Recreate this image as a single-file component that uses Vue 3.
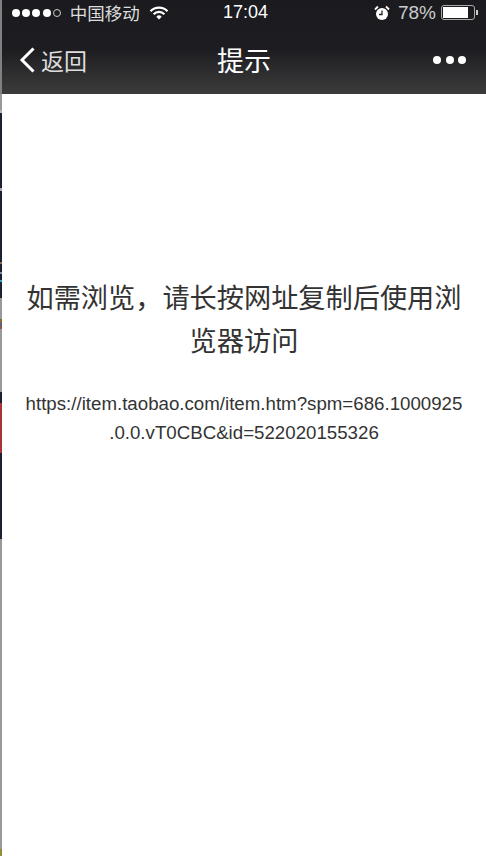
<script setup>
const dots = [1, 2, 3, 4]
const edge = [
  { h: 94, c: '#808080' },
  { h: 16, c: '#999999' },
  { h: 3, c: '#b5b5b5' },
  { h: 75, c: '#1c2033' },
  { h: 3, c: '#aaaaaa' },
  { h: 71, c: '#1c2033' },
  { h: 2, c: '#8a6a5a' },
  { h: 8, c: '#1c2033' },
  { h: 2, c: '#7a8aa0' },
  { h: 6, c: '#1c2033' },
  { h: 2, c: '#3aa0c0' },
  { h: 16, c: '#1c2033' },
  { h: 21, c: '#999999' },
  { h: 4, c: '#8a6a30' },
  { h: 3, c: '#5a5a90' },
  { h: 3, c: '#8a5a40' },
  { h: 63, c: '#999999' },
  { h: 11, c: '#1c2033' },
  { h: 50, c: '#a83434' },
  { h: 86, c: '#1c2033' },
  { h: 310, c: '#999999' },
  { h: 7, c: '#8f8f3c' }
]
</script>

<template>
  <div class="page">
    <div class="edge">
      <i v-for="(s, n) in edge" :key="n" :style="{ height: s.h + 'px', background: s.c }"></i>
    </div>
    <main class="screen">
      <header class="head">
        <div class="status">
          <div class="status-left">
            <span class="signal">
              <i v-for="d in dots" :key="d" class="dot"></i>
              <i class="dot hollow"></i>
            </span>
            <span class="carrier">中国移动</span>
            <svg class="wifi" viewBox="0 0 20 14" width="20" height="14">
              <path d="M1.5 5.2a12 12 0 0 1 17 0" fill="none" stroke="#fff" stroke-width="2.2" />
              <path d="M4.6 8.2a7.6 7.6 0 0 1 10.8 0" fill="none" stroke="#fff" stroke-width="2.2" />
              <path d="M7.3 10.7a3.8 3.8 0 0 1 5.4 0L10 13.4z" fill="#fff" />
            </svg>
          </div>
          <span class="time">17:04</span>
          <div class="status-right">
            <svg class="alarm" viewBox="0 0 16 16" width="16" height="16">
              <circle cx="8" cy="9" r="6" fill="#fff" />
              <path d="M8 5.5V9.5H5" fill="none" stroke="#222" stroke-width="1.3" />
              <path d="M1 4.5 4 1.5M15 4.5 12 1.5" stroke="#fff" stroke-width="1.8" />
            </svg>
            <span class="pct">78%</span>
            <span class="battery"><span class="fill"></span></span>
            <span class="nub"></span>
          </div>
        </div>
        <div class="nav">
          <div class="back">
            <svg viewBox="0 0 18 28" width="18" height="28">
              <path d="M15.5 2.5 4 14l11.5 11.5" fill="none" stroke="#fff" stroke-width="3" />
            </svg>
            <span>返回</span>
          </div>
          <div class="title">提示</div>
          <div class="more"><i></i><i></i><i></i></div>
        </div>
      </header>
      <section class="body">
        <p class="msg">如需浏览，请长按网址复制后使用浏览器访问</p>
        <p class="url">https://item.taobao.com/item.htm?spm=686.1000925.0.0.vT0CBC&amp;id=522020155326</p>
      </section>
    </main>
  </div>
</template>

<style>
html, body { margin: 0; background: #fff; }
</style>

<style scoped>
.page {
  display: flex;
  width: 486px;
  height: 857px;
  overflow: hidden;
  font-family: "Liberation Sans", "Noto Sans CJK SC", sans-serif;
}
.edge { width: 2px; flex: none; display: flex; flex-direction: column; }
.edge i { display: block; flex: none; }
.screen { flex: 1; min-width: 0; display: flex; flex-direction: column; }
.head {
  height: 94px;
  flex: none;
  background: linear-gradient(#1b1b1f 0, #1d1d21 52%, #3c3c3c 100%);
  color: #fff;
}
.status {
  height: 25px;
  display: grid;
  grid-template-columns: 1fr auto 1fr;
  align-items: center;
  padding: 0 8px 0 10px;
}
.status-left, .status-right { display: flex; align-items: center; }
.status-right { justify-content: flex-end; }
.signal { display: flex; gap: 2.2px; }
.dot { width: 8px; height: 8px; border-radius: 50%; background: #fff; box-sizing: border-box; }
.dot.hollow { background: none; border: 1px solid #ccc; }
.carrier { margin-left: 9px; font-size: 17.5px; color: #ddd; }
.wifi { margin-left: 9px; }
.time { font-size: 18px; color: #fff; margin-left: 1px; }
.alarm { margin-right: 8px; }
.pct { font-size: 19px; color: #ccc; margin-right: 5px; }
.battery {
  width: 30px;
  height: 11px;
  border: 1px solid #aaa;
  border-radius: 3px;
  padding: 1px;
  display: flex;
}
.fill { width: 25px; background: #fff; }
.nub { width: 2px; height: 5px; background: #ccc; margin-left: 1px; }
.nav {
  height: 69px;
  display: grid;
  grid-template-columns: 1fr auto 1fr;
  align-items: center;
  padding: 0 16px;
}
.back { display: flex; align-items: center; gap: 5px; font-size: 23px; color: #ddd; }
.title { font-size: 27px; color: #fff; }
.more { display: flex; justify-content: flex-end; gap: 4.5px; padding-right: 4px; }
.more i { width: 8px; height: 8px; border-radius: 50%; background: #fff; }
.body { padding: 0 22px; text-align: center; color: #333; }
.msg {
  margin: 183px 0 0;
  font-size: 27.2px;
  line-height: 43px;
}
.url {
  margin: 26px 0 0;
  font-size: 18.7px;
  line-height: 29px;
  line-break: anywhere;
}
</style>
